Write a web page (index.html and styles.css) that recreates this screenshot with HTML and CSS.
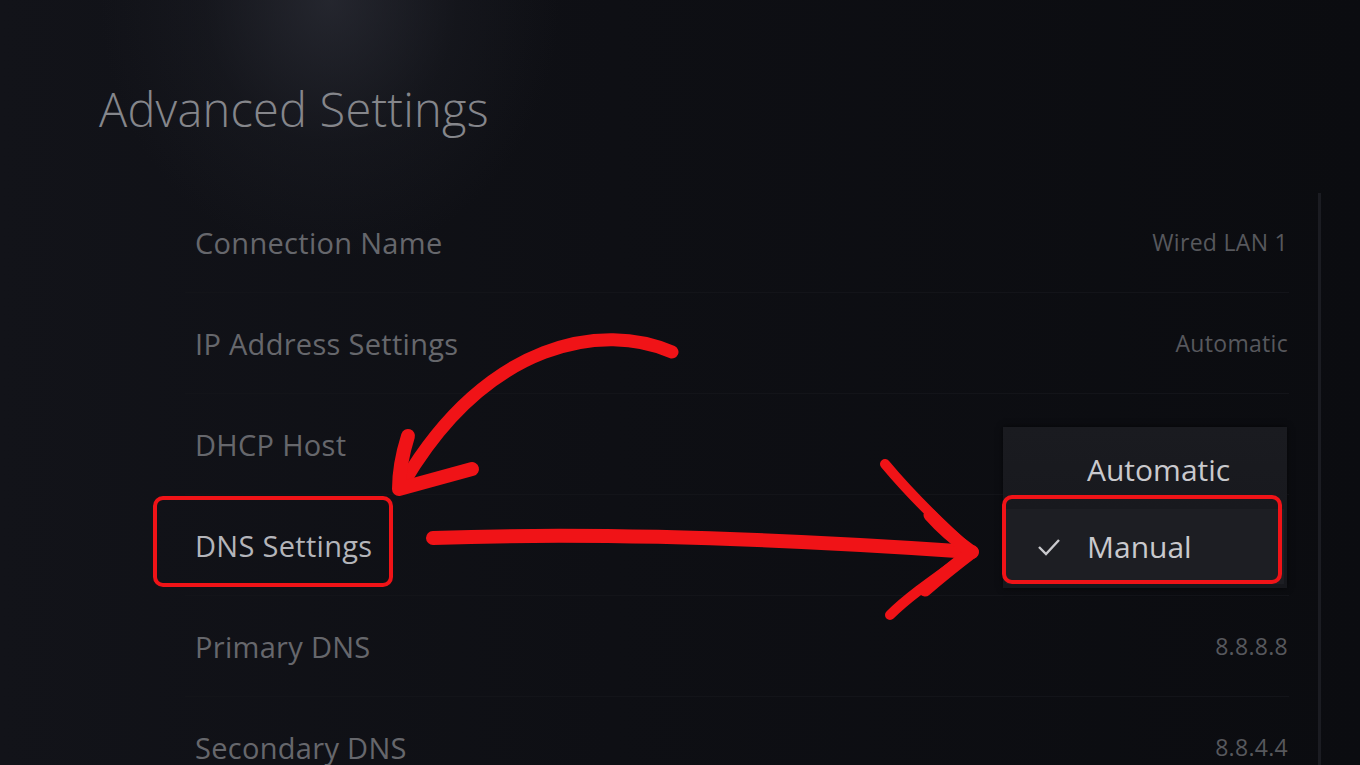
FILE: index.html
```html
<!DOCTYPE html>
<html>
<head>
<meta charset="utf-8">
<link rel="stylesheet" href="styles.css">
</head>
<body>
<div class="screen">
  <header class="head">
    <h1 class="title">Advanced Settings</h1>
  </header>
  <div class="list">
    <div class="row"><span class="label">Connection Name</span><span class="value">Wired LAN 1</span></div>
    <div class="row"><span class="label">IP Address Settings</span><span class="value">Automatic</span></div>
    <div class="row"><span class="label">DHCP Host</span><span class="value"></span></div>
    <div class="row focus"><span class="label">DNS Settings</span><span class="value"></span></div>
    <div class="row"><span class="label">Primary DNS</span><span class="value">8.8.8.8</span></div>
    <div class="row"><span class="label">Secondary DNS</span><span class="value">8.8.4.4</span></div>
  </div>
  <div class="scrollbar"></div>

  <div class="menu">
    <div class="opt"><span class="check"></span><span>Automatic</span></div>
    <div class="opt sel"><span class="check"><svg width="24" height="18" viewBox="0 0 24 18"><path d="M2 9 L9 16 L22 2" fill="none" stroke="#c9c9cd" stroke-width="2.4"/></svg></span><span>Manual</span></div>
  </div>

  <div class="mark mark-dns"></div>
  <div class="mark mark-manual"></div>

  <svg class="arrows" width="1360" height="765" viewBox="0 0 1360 765">
    <g fill="none" stroke="#f01317" stroke-linecap="round" stroke-linejoin="round">
      <path d="M672 352 C604 322 488 340 404 482" stroke-width="13"/>
      <path d="M408 436 C402 455 399 472 399 489 L472 469" stroke-width="14"/>
      <path d="M433 538 C600 532 800 540 972 552" stroke-width="14"/>
      <path d="M885 464 C915 500 945 528 972 552 C940 575 910 595 890 615" stroke-width="10"/>
      <path d="M930 515 C945 532 958 542 972 552 C955 565 940 577 925 590" stroke-width="13"/>
    </g>
  </svg>
</div>
</body>
</html>
```
FILE: styles.css
```css
* { box-sizing: border-box; }
html, body { margin: 0; padding: 0; }
body {
  width: 1360px;
  height: 765px;
  overflow: hidden;
  background: #0c0d12;
  font-family: "Open Sans", "Noto Sans", sans-serif;
}
.screen {
  position: relative;
  width: 1360px;
  height: 765px;
  overflow: hidden;
  background:
    radial-gradient(ellipse 230px 260px at 330px 0px, rgba(50,52,62,0.6), rgba(36,38,46,0.25) 55%, rgba(20,21,27,0) 100%),
    linear-gradient(90deg, #121319 0%, #0e0f14 45%, #0b0c10 100%);
}
.head {
  height: 192px;
  padding: 78px 0 0 99px;
}
.title {
  margin: 0;
  font-weight: 300;
  font-size: 47px;
  line-height: 62px;
  color: #85868b;
  letter-spacing: 0.2px;
}
.list {
  margin-left: 185px;
  width: 1104px;
}
.row {
  height: 101px;
  display: flex;
  align-items: center;
  justify-content: space-between;
  padding: 0 1px 0 10px;
  border-bottom: 1px solid #131419;
}
.label {
  font-size: 29px;
  font-weight: 400;
  color: #66676c;
  letter-spacing: 0.3px;
}
.focus .label { color: #b4b5ba; }
.value {
  font-size: 23px;
  color: #57585d;
  letter-spacing: 0.3px;
}
.scrollbar {
  position: absolute;
  left: 1318px;
  top: 193px;
  width: 3px;
  height: 572px;
  background: #1b1c22;
}
.menu {
  position: absolute;
  left: 1003px;
  top: 427px;
  width: 284px;
  height: 161px;
  background: linear-gradient(180deg, #1a1b20, #16171c);
  box-shadow: 0 0 6px rgba(0,0,0,0.6);
  display: flex;
  flex-direction: column;
  padding: 4px 3px 4px 3px;
}
.opt {
  height: 78px;
  display: flex;
  align-items: center;
  font-size: 30px;
  color: #c9c9cd;
}
.opt.sel {
  height: 76px;
  margin-top: 2px;
  background: #1d1e23;
}
.check {
  width: 81px;
  padding-left: 31px;
  display: flex;
  align-items: center;
}
.mark {
  position: absolute;
  border: 4px solid #f01317;
  border-radius: 10px;
}
.mark-dns {
  left: 153px;
  top: 496px;
  width: 240px;
  height: 91px;
}
.mark-manual {
  left: 1002px;
  top: 495px;
  width: 280px;
  height: 89px;
}
.arrows {
  position: absolute;
  left: 0;
  top: 0;
}
```
